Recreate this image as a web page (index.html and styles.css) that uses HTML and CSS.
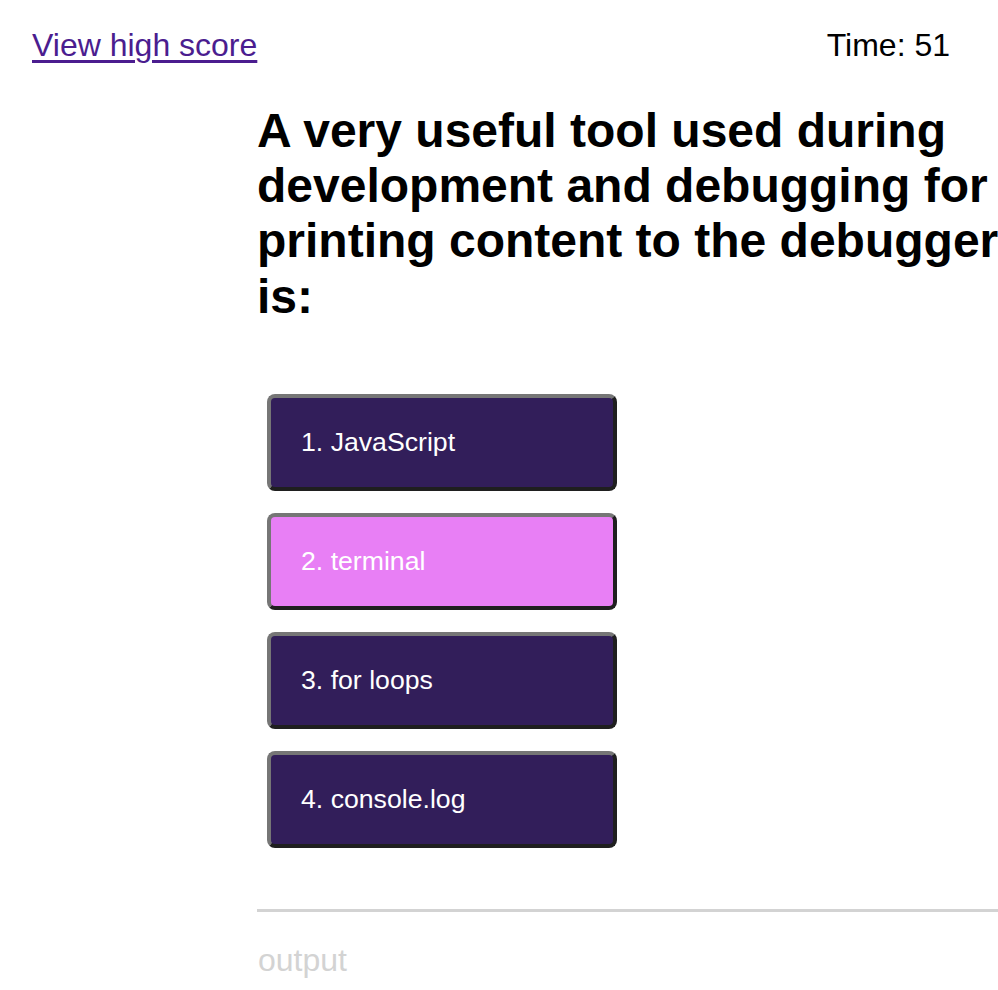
FILE: index.html
```html
<!DOCTYPE html>
<html lang="en">
<head>
<meta charset="utf-8">
<title>Code Quiz</title>
<link rel="stylesheet" href="styles.css">
</head>
<body>
<header class="top-bar">
  <a class="high-score" href="#">View high score</a>
  <div class="timer">Time: 51</div>
</header>
<main class="quiz">
  <h1 class="question">A very useful tool used during development and debugging for printing content to the debugger is:</h1>
  <div class="choices">
    <button class="choice">1. JavaScript</button>
    <button class="choice choice-active">2. terminal</button>
    <button class="choice">3. for loops</button>
    <button class="choice">4. console.log</button>
  </div>
  <hr class="divider">
  <p class="output">output</p>
</main>
</body>
</html>
```

FILE: styles.css
```css
html, body {
  margin: 0;
  padding: 0;
  overflow: hidden;
  background: #ffffff;
}

body {
  font-family: "Liberation Sans", Arial, sans-serif;
  color: #000000;
  width: 998px;
  height: 990px;
}

.top-bar {
  display: flex;
  justify-content: space-between;
  align-items: flex-start;
  padding: 27px 48px 0 32px;
  font-size: 32px;
  line-height: 37px;
}

.high-score {
  color: #4b1d8f;
  text-decoration: underline;
  text-decoration-thickness: 3px;
  text-underline-offset: 4px;
}

.timer {
  color: #000000;
}

.quiz {
  margin-left: 257px;
  width: 760px;
}

.question {
  font-size: 48px;
  font-weight: bold;
  line-height: 55.2px;
  margin: 39px 0 0 0;
  width: 745px;
}

.choices {
  display: flex;
  flex-direction: column;
  align-items: flex-start;
  gap: 22px;
  margin: 70px 0 0 10px;
}

.choice {
  width: 350px;
  height: 97px;
  box-sizing: border-box;
  background: #321e5a;
  color: #ffffff;
  font-family: "Liberation Sans", Arial, sans-serif;
  font-size: 26.67px;
  text-align: left;
  padding: 0 0 0 30px;
  border-width: 4px;
  border-style: solid;
  border-color: #767676 #1f1f1f #1f1f1f #767676;
  border-radius: 8px;
  cursor: pointer;
}

.choice-active {
  background: #e87ff5;
}

.divider {
  border: 0;
  height: 3px;
  background: #d3d3d3;
  margin: 61px 0 0 0;
  width: 741px;
}

.output {
  color: #d3d3d3;
  font-size: 32px;
  line-height: 37px;
  margin: 30px 0 0 1px;
}
```
